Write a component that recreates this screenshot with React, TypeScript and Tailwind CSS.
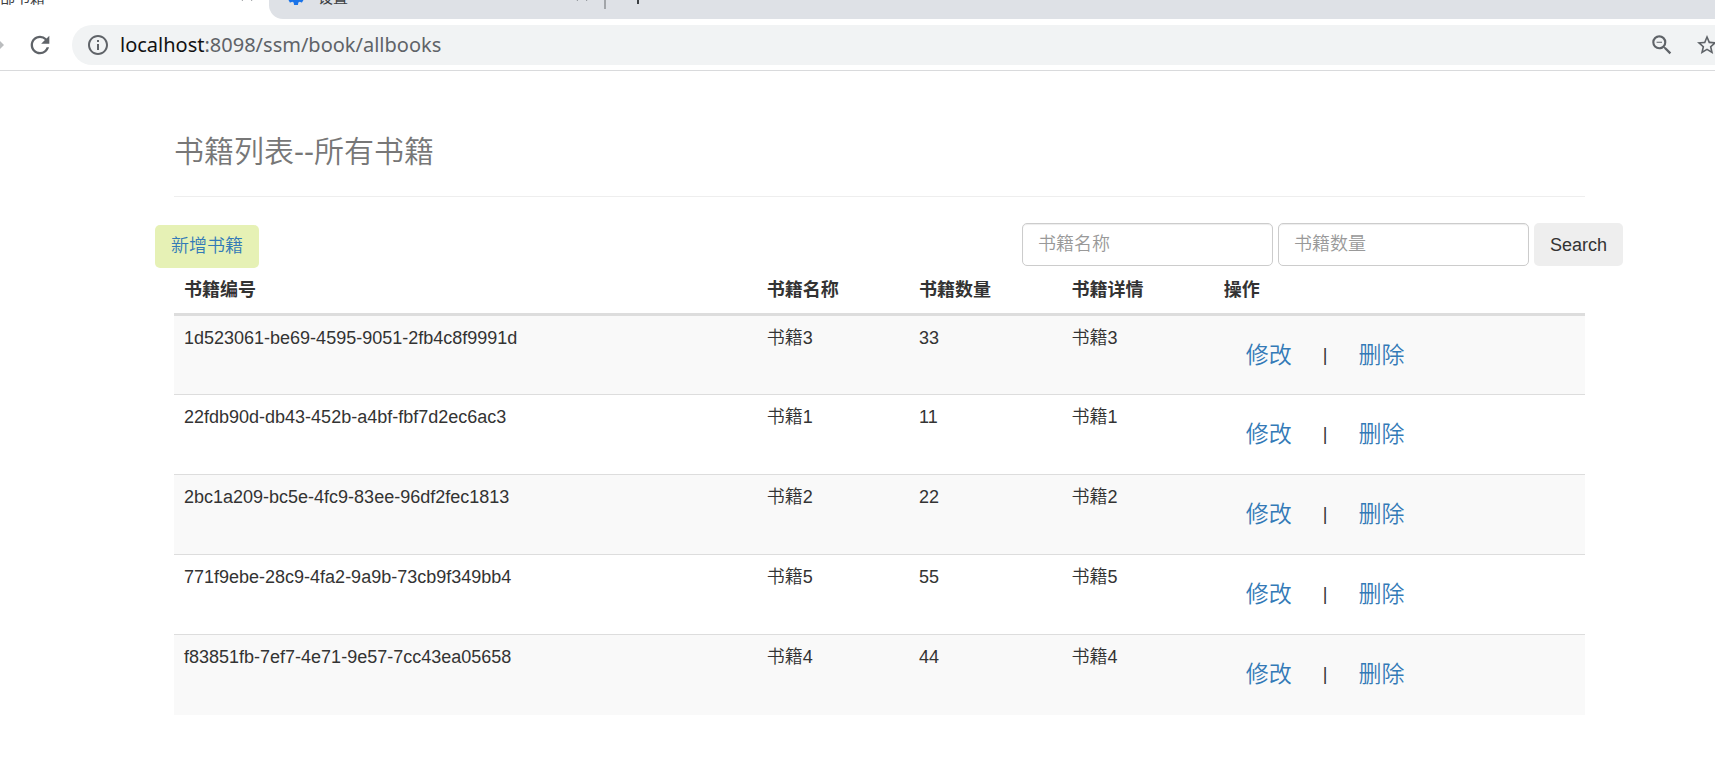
import { MdClose, MdInfoOutline, MdOutlineZoomOut, MdRefresh, MdSettings, MdStarBorder, MdAdd, MdArrowForward } from "react-icons/md";

type Book = { id: string; name: string; count: number; detail: string };

const books: Book[] = [
  { id: "1d523061-be69-4595-9051-2fb4c8f9991d", name: "书籍3", count: 33, detail: "书籍3" },
  { id: "22fdb90d-db43-452b-a4bf-fbf7d2ec6ac3", name: "书籍1", count: 11, detail: "书籍1" },
  { id: "2bc1a209-bc5e-4fc9-83ee-96df2fec1813", name: "书籍2", count: 22, detail: "书籍2" },
  { id: "771f9ebe-28c9-4fa2-9a9b-73cb9f349bb4", name: "书籍5", count: 55, detail: "书籍5" },
  { id: "f83851fb-7ef7-4e71-9e57-7cc43ea05658", name: "书籍4", count: 44, detail: "书籍4" },
];

function TabStrip() {
  return (
    <div className="flex h-[19px] items-end overflow-hidden bg-white font-['Noto_Sans','Noto_Sans_CJK_SC',sans-serif] text-[15px] leading-5 text-[#3c4043]">
      <div className="flex h-10 w-[269px] shrink-0 items-start justify-between pr-3">
        <span className="mt-2 whitespace-nowrap">部书籍</span>
        <button type="button" aria-label="关闭标签页" className="mt-[6px] text-[#5f6368]">
          <MdClose className="size-5" />
        </button>
      </div>
      <div className="flex h-10 grow items-start rounded-bl-[14px] bg-[#dee1e6] pl-[17px]">
        <MdSettings className="mt-2 size-5 text-[#1a73e8]" />
        <span className="mt-2 ml-3 w-[254px]">设置</span>
        <button type="button" aria-label="关闭标签页" className="mt-[6px] text-[#5f6368]">
          <MdClose className="size-5" />
        </button>
        <span className="ml-3 h-[30px] w-[2px] bg-[#a2a5a9]" />
        <button type="button" aria-label="新标签页" className="mt-[6px] ml-5 text-[#3c4043]">
          <MdAdd className="size-6" />
        </button>
      </div>
    </div>
  );
}

function Toolbar() {
  return (
    <div className="flex items-center overflow-hidden border-b border-[#d9dadc] bg-white pt-[6px] pb-[5px]">
      <MdArrowForward className="-ml-4 size-6 shrink-0 text-[#babcbe]" />
      <button type="button" aria-label="重新加载" className="ml-[18px] text-[#5f6368]">
        <MdRefresh className="size-7" />
      </button>
      <div className="ml-[18px] flex h-10 min-w-0 grow items-center rounded-l-full bg-[#f1f3f4] pl-[14px] text-[#5f6368]">
        <MdInfoOutline className="size-6 shrink-0" />
        <p className="ml-[10px] grow font-['Noto_Sans',sans-serif] text-[20px] leading-7">
          <span className="text-[#111111]">localhost</span>:8098/ssm/book/allbooks
        </p>
        <button type="button" aria-label="缩放">
          <MdOutlineZoomOut className="size-[26px]" />
        </button>
        <button type="button" aria-label="收藏" className="-mr-1 ml-5">
          <MdStarBorder className="size-6" />
        </button>
      </div>
    </div>
  );
}

const field =
  "h-[43px] w-[251px] rounded-[5px] border border-[#cccccc] bg-white px-[15px] text-[#555555] shadow-[inset_0_1px_1px_rgba(0,0,0,0.075)] placeholder:text-[#999999] placeholder:opacity-100";

export default function App() {
  return (
    <div className="min-h-screen bg-white">
      <TabStrip />
      <Toolbar />
      <main className="pr-[130px] pl-[174px] font-['Liberation_Sans','Noto_Sans_CJK_SC',sans-serif] text-[18px] leading-[26px] font-[350] text-[#333333]">
        <header className="border-b border-[#eeeeee] pt-[61px] pb-6">
          <h1 className="text-[30px] leading-10 font-[350] text-[#777777]">书籍列表--所有书籍</h1>
        </header>
        <div className="-mr-[38px] -ml-[19px] flex items-start justify-between pt-[26px]">
          <a href="#add" className="mt-[2px] h-[43px] rounded-[5px] bg-[#e6f1b5] px-4 py-2 text-[#337ab7]">
            新增书籍
          </a>
          <form className="flex gap-[5px]" onSubmit={(e) => e.preventDefault()}>
            <input type="text" aria-label="书籍名称" placeholder="书籍名称" className={field} />
            <input type="text" aria-label="书籍数量" placeholder="书籍数量" className={field} />
            <button type="submit" className="h-[43px] rounded-[5px] bg-[#eeeeee] px-4">
              Search
            </button>
          </form>
        </div>
        <table className="w-full table-fixed border-collapse text-left">
          <thead>
            <tr className="border-b-[3px] border-[#dddddd] font-bold">
              <th className="w-[41.3%] px-[10px] pt-[9px] pb-[10px]">书籍编号</th>
              <th className="w-[10.8%] px-[10px] pt-[9px] pb-[10px]">书籍名称</th>
              <th className="w-[10.8%] px-[10px] pt-[9px] pb-[10px]">书籍数量</th>
              <th className="w-[10.8%] px-[10px] pt-[9px] pb-[10px]">书籍详情</th>
              <th className="px-[10px] pt-[9px] pb-[10px]">操作</th>
            </tr>
          </thead>
          <tbody>
            {books.map((book) => (
              <tr key={book.id} className="h-20 border-t border-[#dddddd] align-top odd:bg-[#f9f9f9]">
                <td className="px-[10px] pt-[9px]">{book.id}</td>
                <td className="px-[10px] pt-[9px]">{book.name}</td>
                <td className="px-[10px] pt-[9px]">{book.count}</td>
                <td className="px-[10px] pt-[9px]">{book.detail}</td>
                <td className="px-8 pt-[23px]">
                  <div className="flex items-center gap-[31px] leading-8">
                    <a href="#edit" className="text-[23px] text-[#337ab7]">修改</a>
                    <span>|</span>
                    <a href="#delete" className="text-[23px] text-[#337ab7]">删除</a>
                  </div>
                </td>
              </tr>
            ))}
          </tbody>
        </table>
      </main>
    </div>
  );
}
